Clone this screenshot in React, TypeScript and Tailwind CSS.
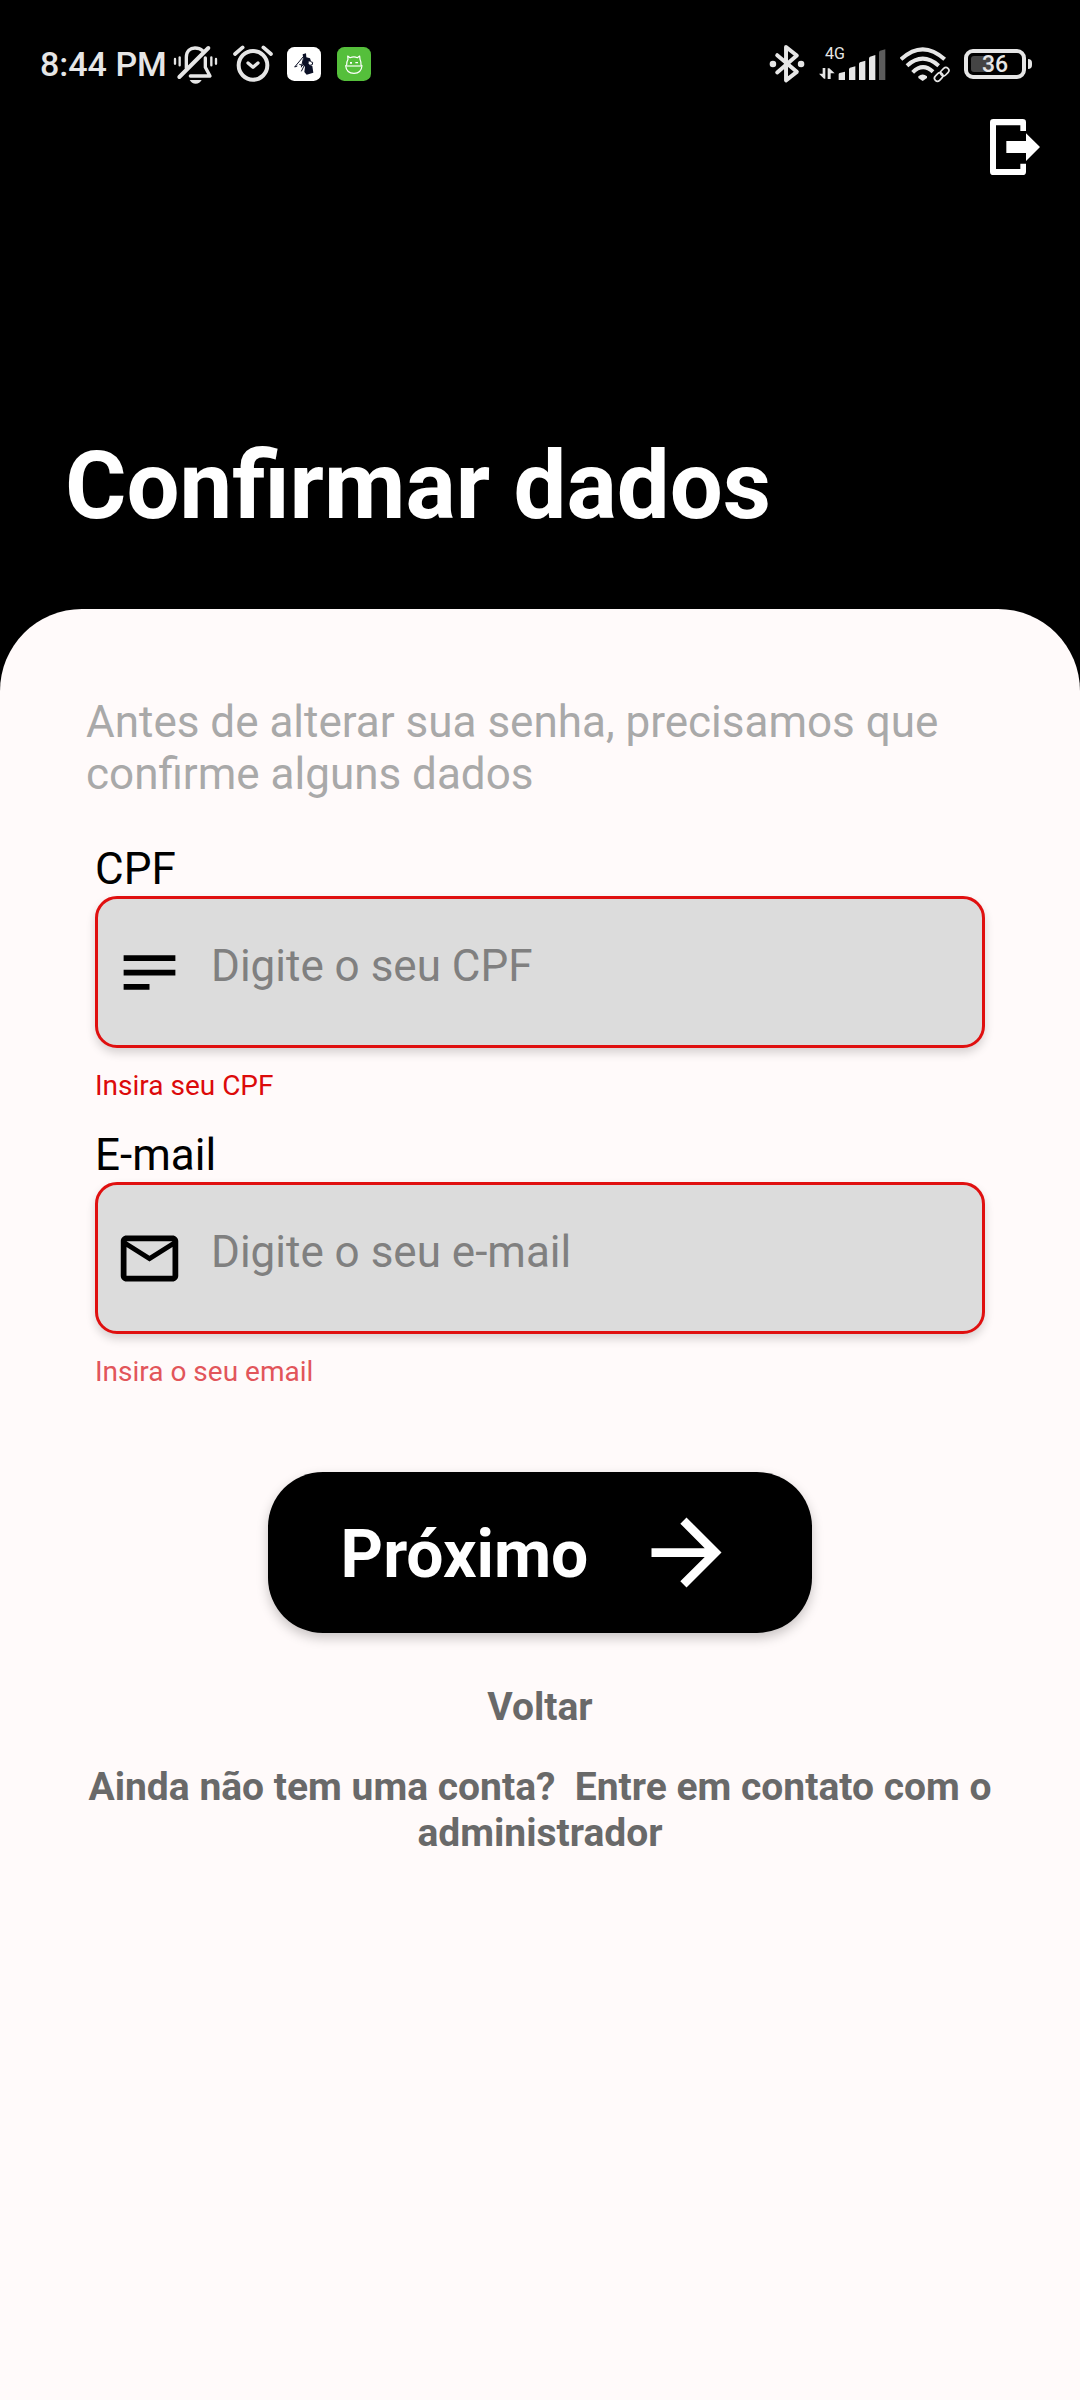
import React from "react";

const INK = "#e6e6e6";

function BellOffIcon() {
  return (
    <svg className="h-10 w-[45px]" viewBox="460 42 135 120" fill="none" stroke={INK} strokeWidth="10" strokeLinecap="round" aria-hidden="true">
      <path d="M500 114V82C500 62 512 54 526 54C536 54 543 57 549 62" strokeLinejoin="round" />
      <path d="M566 54L479 141" strokeWidth="12" />
      <path d="M557 84V112L571 138H512" strokeLinejoin="round" />
      <path d="M466 87v14M480 82v24M575 82v24M589 87v14" strokeWidth="7" />
      <path d="M510 150H546Q540 161 528 161Q516 161 510 150Z" fill={INK} stroke="none" />
    </svg>
  );
}

function AlarmIcon() {
  return (
    <svg className="h-10 w-10" viewBox="638 42 120 120" fill="none" stroke={INK} strokeLinecap="round" aria-hidden="true">
      <circle cx="698" cy="106" r="43" strokeWidth="12" />
      <path d="M644 72L667 52M729 52L752 72" strokeWidth="11" />
      <path d="M683 99L698 112L713 99" strokeWidth="10" strokeLinejoin="round" />
    </svg>
  );
}

function FigureAppIcon() {
  return (
    <svg className="h-[34px] w-[34px]" viewBox="801 51 102 102" aria-hidden="true">
      <rect x="801" y="51" width="102" height="102" rx="22" fill="#fff" />
      <path d="M848 73L858 70L859 82L870 85L873 94L866 100L870 106L877 108L880 128L860 134L853 126L855 110L847 103L850 88Z" fill="#0b1026" />
      <path d="M824 111L850 80M824 111L832 108M850 86L844 112M838 103L850 107M852 108L844 124M871 95L878 97L877 104L869 106" fill="none" stroke="#0b1026" strokeWidth="3" />
      <path d="M866 94L873 96L872 103L866 102Z" fill="#fff" />
    </svg>
  );
}

function RobotAppIcon() {
  return (
    <svg className="h-[34px] w-[34px]" viewBox="951 51 102 102" aria-hidden="true">
      <rect x="951" y="51" width="102" height="102" rx="22" fill="#55bf3b" />
      <g fill="none" stroke="#fff" strokeWidth="3.5" strokeLinejoin="round">
        <path d="M984 88L983 78L990 83Q1002 78 1012 83L1019 78L1020 88Q1023 94 1023 105L1026 107Q1024 130 1002 130Q979 130 977 107L980 105Q980 94 984 88Z" />
        <path d="M979 108H1024" />
      </g>
      <path d="M990 96h6v5h-6zM1006 96h8v4h-8z" fill="#fff" />
    </svg>
  );
}

function BluetoothIcon() {
  return (
    <svg className="h-10 w-9" viewBox="86 42 110 120" fill="none" stroke={INK} strokeWidth="12" strokeLinecap="round" strokeLinejoin="round" aria-hidden="true">
      <path d="M111 75L171 126L138 152V50L171 76L111 128" />
      <circle cx="98" cy="102" r="10" fill={INK} stroke="none" />
      <circle cx="184" cy="102" r="10" fill={INK} stroke="none" />
    </svg>
  );
}

function SignalIcon() {
  return (
    <div className="relative">
      <svg className="h-10 w-[67px]" viewBox="235 42 201 120" fill={INK} aria-hidden="true">
        <path d="M246 114h8v32h-4L235 131h11zM261 147v-32h5l16 15h-12v17z" />
        <path d="M294 133Q294 130 297 129L313 125V150H294zM325 118Q325 115 328 113L344 109V150H325zM355 102Q355 99 358 97L374 92V150H355zM385 86Q385 82 388 80L404 75V150H385z" />
        <path d="M415 68Q415 64 418 62L434 58V150H415z" fill="#5c5c5c" />
      </svg>
      <span className="absolute top-0 left-[6px] text-[16px] leading-[20px] text-[#e6e6e6]">4G</span>
    </div>
  );
}

function WifiLinkIcon() {
  return (
    <svg className="h-10 w-[50px]" viewBox="477 42 150 120" fill="none" stroke={INK} strokeWidth="12" aria-hidden="true">
      <path d="M480 88Q545 28 611 88M498 107Q545 65 593 107" />
      <path d="M515 127Q545 97 576 125" />
      <path d="M532 139Q545 128 558 139V144L545 153L532 144Z" fill={INK} stroke="none" />
      <rect x="-16" y="-9" width="32" height="18" rx="9" transform="translate(594 139) rotate(-45)" stroke="#000" strokeWidth="14" />
      <g strokeWidth="5">
        <rect x="-14" y="-9" width="28" height="18" rx="9" transform="translate(593 141) rotate(-45)" />
        <rect x="-14" y="-9" width="28" height="18" rx="9" transform="translate(611 125) rotate(-45)" />
      </g>
    </svg>
  );
}

function Battery() {
  return (
    <div className="flex items-center gap-[2px]">
      <div className="relative flex h-[30px] w-[62px] items-center justify-center rounded-[9px] border-4 border-[#e6e6e6]">
        <span className="absolute top-[3px] left-[3px] h-4 w-[21px] rounded-[3px] bg-[#444]" />
        <span className="relative text-[23px] leading-none font-medium text-[#e6e6e6]">36</span>
      </div>
      <span className="h-[10px] w-1 rounded-r-sm bg-[#e6e6e6]" />
    </div>
  );
}

function NotesIcon() {
  return (
    <svg className="size-[69px] shrink-0" viewBox="0 0 24 24" aria-hidden="true">
      <path d="M3 6h18v2H3zM3 11h18v2H3zM3 16h9v2H3z" />
    </svg>
  );
}

function MailIcon() {
  return (
    <svg className="size-[69px] shrink-0" viewBox="0 0 24 24" aria-hidden="true">
      <path d="M20 4H4c-1.1 0-1.99.9-1.99 2L2 18c0 1.1.9 2 2 2h16c1.1 0 2-.9 2-2V6c0-1.1-.9-2-2-2zm0 14H4V8l8 5 8-5v10zm-8-7L4 6h16l-8 5z" />
    </svg>
  );
}

type FieldProps = {
  id: string;
  label: string;
  type: string;
  placeholder: string;
  icon: React.ReactNode;
  error: string;
  errorClass: string;
};

function Field({ id, label, type, placeholder, icon, error, errorClass }: FieldProps) {
  return (
    <div className="flex flex-col px-[9px]">
      <label htmlFor={id} className="text-[44px] leading-[53px] text-black">
        {label}
      </label>
      <div className="flex h-[152px] items-center gap-[22px] rounded-[22px] border-3 border-[#e01010] bg-[#dcdcdc] pr-5 pl-[17px] shadow-[0_5px_10px_rgba(0,0,0,0.16)]">
        {icon}
        <input
          id={id}
          type={type}
          placeholder={placeholder}
          aria-describedby={id + "-error"}
          className="h-full min-w-0 flex-1 bg-transparent pb-3 pl-[5px] text-[44px] text-black outline-none placeholder:text-[#808080]"
        />
      </div>
      <p id={id + "-error"} className={errorClass}>
        {error}
      </p>
    </div>
  );
}

export default function App() {
  return (
    <div className="flex min-h-screen flex-col bg-black font-[Roboto,sans-serif]">
      <header className="flex flex-col pt-11 pb-[67px]">
        <div className="flex h-10 items-center justify-between pr-12 pl-10">
          <div className="flex items-center">
            <span className="mr-[6px] text-[34px] leading-10 font-medium text-[#e6e6e6]">8:44 PM</span>
            <BellOffIcon />
            <div className="ml-[15px] flex items-center gap-[14px]">
              <AlarmIcon />
              <div className="flex items-center gap-4">
                <FigureAppIcon />
                <RobotAppIcon />
              </div>
            </div>
          </div>
          <div className="flex items-center gap-[14px]">
            <BluetoothIcon />
            <SignalIcon />
            <WifiLinkIcon />
            <Battery />
          </div>
        </div>
        <button type="button" aria-label="Sair" className="mt-[35px] mr-10 self-end">
          <svg className="h-14 w-[50px]" viewBox="750 267 150 168" fill="#fff" aria-hidden="true">
            <path d="M760 267H848Q858 267 858 277V303H841V286H768V417H841V401H858V425Q858 435 848 435H760Q750 435 750 425V277Q750 267 760 267Z" />
            <path d="M799 333H858V310L900 351L858 393V369H799Z" />
          </svg>
        </button>
        <h1 className="mt-[255px] px-[65px] text-[94px] leading-[112px] font-bold text-white">Confirmar dados</h1>
      </header>

      <main className="flex flex-1 flex-col rounded-t-[82px] bg-[#fffafa] px-[86px] pt-[87px]">
        <p className="text-[44px] leading-[52px] text-[#a9a9a9]">
          Antes de alterar sua senha, precisamos que confirme alguns dados
        </p>

        <form className="mt-[43px] flex flex-col" onSubmit={(e) => e.preventDefault()}>
          <div className="flex flex-col gap-[27px]">
            <Field
              id="cpf"
              label="CPF"
              type="text"
              placeholder="Digite o seu CPF"
              icon={<NotesIcon />}
              error="Insira seu CPF"
              errorClass="mt-[21px] text-[28px] leading-[33px] text-[#dc0a0a]"
            />
            <Field
              id="email"
              label="E-mail"
              type="email"
              placeholder="Digite o seu e-mail"
              icon={<MailIcon />}
              error="Insira o seu email"
              errorClass="mt-[21px] text-[28px] leading-[33px] text-[#e2555a]"
            />
          </div>
          <button
            type="submit"
            className="mt-[84px] flex h-[161px] items-center gap-[46px] self-center rounded-[55px] bg-black px-[73px] text-[66px] font-bold text-white shadow-[0_5px_12px_rgba(0,0,0,0.22)]"
          >
            <span className="pt-1">Próximo</span>
            <svg className="size-[105px]" viewBox="0 0 24 24" fill="#fff" aria-hidden="true">
              <path d="M12 4l-1.41 1.41L16.17 11H4v2h12.17l-5.58 5.59L12 20l8-8z" />
            </svg>
          </button>
        </form>

        <a href="#voltar" className="mt-[51px] self-center text-[39px] leading-[46px] font-bold text-[#696969]">
          Voltar
        </a>
        <p className="mt-[34px] text-center text-[39px] leading-[46px] font-bold text-[#696969]">
          Ainda não tem uma conta?&nbsp; Entre em contato com o administrador
        </p>
      </main>
    </div>
  );
}
